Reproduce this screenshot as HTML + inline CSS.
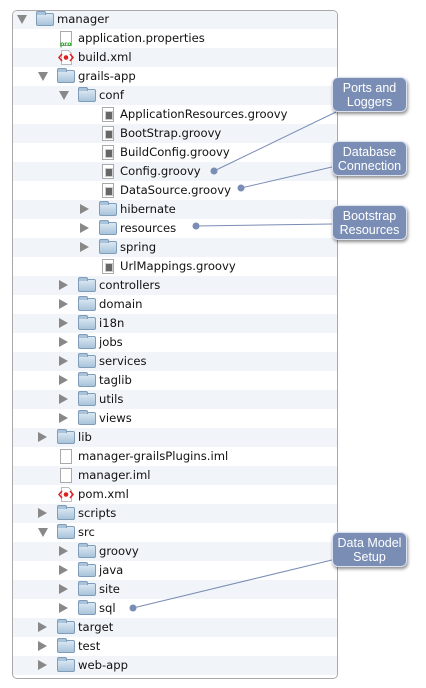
<!DOCTYPE html>
<html><head><meta charset="utf-8"><style>
body{margin:0;width:426px;height:688px;background:#fff;position:relative;overflow:hidden;font-family:"Lucida Grande","DejaVu Sans","Liberation Sans",sans-serif;}
#panel{position:absolute;left:12px;top:10px;width:324px;height:667px;border:1px solid #a9a9a9;border-radius:5px;overflow:hidden;background:#fff}
.r{position:absolute;left:0;width:324px;height:19px;font-size:11.6px;line-height:19px;color:#111}
.r.s{background:#f1f4f9}
.t{position:absolute;top:5px;width:0;height:0}
.t.d{border-left:5px solid transparent;border-right:5px solid transparent;border-top:9px solid #888}
.t.c{border-top:5px solid transparent;border-bottom:5px solid transparent;border-left:9px solid #888;top:4px}
.f{position:absolute;top:3px;width:18px;height:13px;border-radius:2px;background:linear-gradient(#dbe8f3,#a9c3da);border:1px solid #7f9cb8;box-sizing:border-box}
.f:before{content:"";position:absolute;left:-1px;top:-3px;width:8px;height:3px;background:#a9c3da;border:1px solid #7f9cb8;border-bottom:none;border-radius:2px 2px 0 0}
.d1{position:absolute;top:2px;width:12px;height:15px;border:1px solid #aaa;background:#fff;box-sizing:border-box}
.g:after{content:"";position:absolute;left:2px;top:3px;width:6px;height:7px;background:#666;border:1px solid #ccc}
.p:after{content:"pro";position:absolute;left:-1px;top:3px;font-size:6px;color:#2a2;font-weight:bold}
.xs{position:absolute;top:2px}
.n{position:absolute;top:0;white-space:nowrap}
.cb{position:absolute;left:332px;width:75px;height:35px;background:#7a8db5;border:1px solid #dbe1ee;border-radius:6px;box-shadow:1px 2px 3px rgba(0,0,0,.45);color:#fff;font-family:"Liberation Sans",sans-serif;font-size:12.5px;line-height:14px;text-align:center;box-sizing:border-box;padding-top:3px}
</style></head><body>
<div id="panel"></div>
<svg style="position:absolute;left:0;top:0" width="426" height="688">
<g stroke="#7a8db5" stroke-width="1" fill="#7a8db5">
<line x1="214" y1="171" x2="336" y2="112"/><circle cx="214" cy="171" r="3"/>
<line x1="241" y1="188" x2="332" y2="167"/><circle cx="241" cy="188" r="3"/>
<line x1="196" y1="226" x2="332" y2="224"/><circle cx="196" cy="226" r="3"/>
<line x1="133" y1="608" x2="332" y2="560"/><circle cx="133" cy="608" r="3"/>
</g></svg>
<div class="cb" style="top:77px">Ports and<br>Loggers</div>
<div class="cb" style="top:141px">Database<br>Connection</div>
<div class="cb" style="top:205px">Bootstrap<br>Resources</div>
<div class="cb" style="top:532px">Data Model<br>Setup</div>
<script>
var X='<svg width="16" height="15" viewBox="0 0 16 15"><path d="M3.5 0.5h7l3 3v11h-10z" fill="#fff" stroke="#bbb"/><path d="M4 4L1 7.5 4 11M12 4l3 3.5-3 3.5" fill="none" stroke="#d22" stroke-width="1.5"/><circle cx="8" cy="7.5" r="2.3" fill="#d22"/></svg>';
var rows=[
[0,'d','manager'],[1,'p','application.properties'],[1,'x','build.xml'],[1,'d','grails-app'],[2,'d','conf'],
[3,'g','ApplicationResources.groovy'],[3,'g','BootStrap.groovy'],[3,'g','BuildConfig.groovy'],[3,'g','Config.groovy'],[3,'g','DataSource.groovy'],
[3,'c','hibernate'],[3,'c','resources'],[3,'c','spring'],[3,'g','UrlMappings.groovy'],
[2,'c','controllers'],[2,'c','domain'],[2,'c','i18n'],[2,'c','jobs'],[2,'c','services'],[2,'c','taglib'],[2,'c','utils'],[2,'c','views'],
[1,'c','lib'],[1,'b','manager-grailsPlugins.iml'],[1,'b','manager.iml'],[1,'x','pom.xml'],[1,'c','scripts'],[1,'d','src'],
[2,'c','groovy'],[2,'c','java'],[2,'c','site'],[2,'c','sql'],[1,'c','target'],[1,'c','test'],[1,'c','web-app']];
var h='';
rows.forEach(function(r,i){
 var L=r[0],k=r[1],top=i*19-1;
 h+='<div class="r'+(i%2==0?' s':'')+'" style="top:'+top+'px">';
 if(k=='d'||k=='c'){
  h+='<div class="t '+k+'" style="left:'+(4+21*L)+'px"></div>';
  h+='<div class="f" style="left:'+(23+21*L)+'px"></div>';
 } else if(k=='x'){
  h+='<div class="xs" style="left:'+(24+21*L)+'px">'+X+'</div>';
 } else {
  var cls=k=='b'?'':k;
  h+='<div class="d1 '+cls+'" style="left:'+(26+21*L)+'px"></div>';
 }
 h+='<span class="n" style="left:'+(44+21*L)+'px">'+r[2]+'</span></div>';
});
document.getElementById('panel').innerHTML=h;
</script>
</body></html>
